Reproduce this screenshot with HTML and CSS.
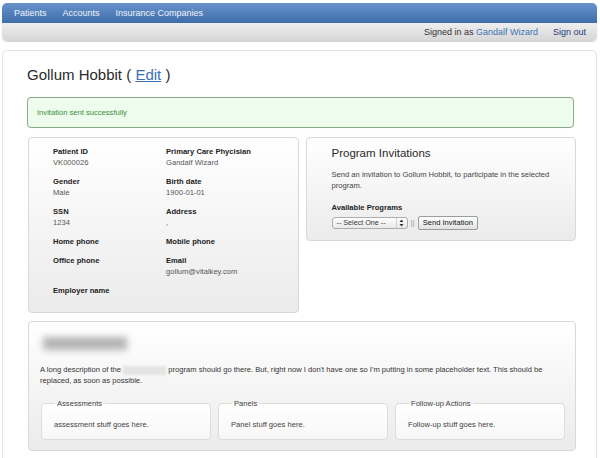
FILE: index.html
```html
<!DOCTYPE html>
<html lang="en">
<head>
<meta charset="utf-8">
<title>Gollum Hobbit</title>
<link rel="stylesheet" href="styles.css">
</head>
<body>
<header class="topbar">
  <nav class="navbar">
    <a href="#">Patients</a>
    <a href="#">Accounts</a>
    <a href="#">Insurance Companies</a>
  </nav>
  <div class="subbar">
    <span>Signed in as <a class="user" href="#">Gandalf Wizard</a></span>
    <a class="signout" href="#">Sign out</a>
  </div>
</header>

<main class="container">
  <h1 class="title">Gollum Hobbit ( <a href="#">Edit</a> )</h1>
  <div class="alert">Invitation sent successfully</div>

  <div class="top-grid">
    <section class="card patient">
      <div class="field"><div class="lbl">Patient ID</div><div class="val">VK000026</div></div>
      <div class="field"><div class="lbl">Primary Care Phycisian</div><div class="val">Gandalf Wizard</div></div>
      <div class="field"><div class="lbl">Gender</div><div class="val">Male</div></div>
      <div class="field"><div class="lbl">Birth date</div><div class="val">1900-01-01</div></div>
      <div class="field"><div class="lbl">SSN</div><div class="val">1234</div></div>
      <div class="field"><div class="lbl">Address</div><div class="val">,</div></div>
      <div class="field"><div class="lbl">Home phone</div></div>
      <div class="field"><div class="lbl">Mobile phone</div></div>
      <div class="field"><div class="lbl">Office phone</div></div>
      <div class="field"><div class="lbl">Email</div><div class="val">gollum@vitalkey.com</div></div>
      <div class="field"><div class="lbl">Employer name</div></div>
    </section>

    <section class="card invites">
      <h2 class="inv-title">Program Invitations</h2>
      <p class="inv-text">Send an invitation to Gollum Hobbit, to participate in the selected program.</p>
      <div class="lbl">Available Programs</div>
      <div class="controls">
        <div class="select">
          <span class="sel-text">-- Select One --</span>
          <span class="sel-arrow">
            <svg width="5" height="8" viewBox="0 0 5 8"><path d="M2.5 0.5 L4.5 3 L0.5 3 Z M2.5 7.5 L4.5 5 L0.5 5 Z" fill="#333"/></svg>
          </span>
        </div>
        <span class="sep">||</span>
        <button class="btn" type="button">Send Invitation</button>
      </div>
    </section>
  </div>

  <section class="card program">
    <div class="prog-head"><div class="blur-title"></div></div>
    <p class="prog-desc">A long description of the <span class="blur-word"></span> program should go there. But, right now I don't have one so I'm putting in some placeholder text. This should be replaced, as soon as possible.</p>
    <div class="sets">
      <fieldset class="set"><legend>Assessments</legend>assessment stuff goes here.</fieldset>
      <fieldset class="set"><legend>Panels</legend>Panel stuff goes here.</fieldset>
      <fieldset class="set"><legend>Follow-up Actions</legend>Follow-up stuff goes here.</fieldset>
    </div>
  </section>
</main>
</body>
</html>
```

FILE: styles.css
```css
body {
  margin: 0;
  font-family: "Liberation Sans", Arial, sans-serif;
  color: #333;
  background: #fff;
}

a { text-decoration: none; }

.topbar {
  margin: 3px 3px 0 2px;
}

.navbar {
  height: 20px;
  display: flex;
  align-items: center;
  padding-left: 4px;
  background: linear-gradient(#6793cc, #3f6da9);
  border-radius: 5px 5px 0 0;
}

.navbar a {
  color: #eef3fa;
  font-size: 9px;
  padding: 0 8px;
}

.subbar {
  height: 18px;
  display: flex;
  justify-content: flex-end;
  align-items: center;
  gap: 15px;
  padding-right: 11px;
  font-size: 9px;
  color: #333;
  background: linear-gradient(#eeeeee, #d6d6d6);
  border-radius: 0 0 5px 5px;
  box-shadow: 0 1px 1px rgba(0, 0, 0, 0.18);
}

.subbar .user { color: #4173b3; }
.subbar .signout { color: #1d3a78; }

.container {
  margin: 9px 3px 0 2px;
  border: 1px solid #e3e3e3;
  border-radius: 5px;
  padding: 15px 20px 30px 24px;
}

.title {
  margin: 0;
  font-size: 15px;
  line-height: 18px;
  font-weight: normal;
  color: #2a2a2a;
}

.title a {
  color: #3a70b5;
  text-decoration: underline;
}

.alert {
  margin-top: 13px;
  margin-right: 2px;
  height: 29px;
  line-height: 29px;
  padding-left: 9px;
  border: 1px solid #8aab8a;
  border-radius: 4px;
  background: #edfcec;
  color: #3a8d3a;
  font-size: 7.6px;
  box-shadow: 0 0 1px rgba(0, 0, 0, 0.1);
}

.top-grid {
  margin-top: 9px;
  margin-left: 1px;
  display: grid;
  grid-template-columns: 1fr 1fr;
  gap: 7px;
  align-items: start;
}

.card {
  border: 1px solid #d9d9d9;
  border-radius: 4px;
  background: linear-gradient(#ffffff, #ebebeb);
  font-size: 7.6px;
  line-height: 11px;
}

.lbl {
  font-weight: bold;
  color: #222;
}

.val {
  color: #555;
}

.patient {
  display: grid;
  grid-template-columns: 113px 1fr;
  padding: 8px 20px 8px 24px;
}

.field {
  margin-bottom: 8px;
}

.invites {
  padding: 8px 20px 10px 25px;
}

.inv-title {
  margin: 0 0 9px;
  font-size: 11.5px;
  line-height: 14px;
  font-weight: normal;
  color: #2a2a2a;
}

.inv-text {
  margin: 0 0 11px;
  color: #444;
}

.controls {
  margin-top: 3px;
  display: flex;
  align-items: center;
  gap: 3px;
  height: 14px;
}

.select {
  width: 76px;
  height: 12px;
  box-sizing: border-box;
  display: flex;
  align-items: center;
  border: 1px solid #adadad;
  border-radius: 3px;
  background: linear-gradient(#ffffff, #e8e8e8);
}

.sel-text {
  flex: 1;
  padding-left: 4px;
  font-size: 7.2px;
  line-height: 10px;
  color: #333;
}

.sel-arrow {
  width: 10px;
  height: 10px;
  display: flex;
  align-items: center;
  justify-content: center;
  border-left: 1px solid #d0d0d0;
}

.sep {
  color: #9a9a9a;
  font-size: 8px;
  line-height: 10px;
}

.btn {
  height: 14px;
  padding: 0 4px;
  border: 1px solid #9c9c9c;
  border-radius: 2px;
  background: linear-gradient(#ffffff, #e2e2e2);
  font-family: "Liberation Sans", Arial, sans-serif;
  font-size: 7.6px;
  line-height: 12px;
  color: #111;
}

.program {
  margin-top: 8px;
  margin-left: 1px;
  padding: 12px 10px 10px 11px;
}

.prog-head {
  height: 19px;
}

.blur-title {
  width: 84px;
  height: 13px;
  margin: 3px 0 0 3px;
  background: #b3b3b3;
  filter: blur(3.5px);
}

.prog-desc {
  margin: 8px 0 12px;
  color: #333;
}

.blur-word {
  display: inline-block;
  width: 43px;
  height: 9px;
  vertical-align: middle;
  background: #e4e4e4;
  filter: blur(1px);
}

.sets {
  display: grid;
  grid-template-columns: 1fr 1fr 1fr;
  gap: 7px;
  margin-left: 1px;
}

.set {
  margin: 0;
  min-width: 0;
  padding: 10px 12px 9px;
  border: 1px solid #dcdcdc;
  border-radius: 4px;
  background: linear-gradient(#ffffff, #f7f7f7);
  color: #444;
}

.set legend {
  padding: 0 3px;
  color: #444;
}
```
